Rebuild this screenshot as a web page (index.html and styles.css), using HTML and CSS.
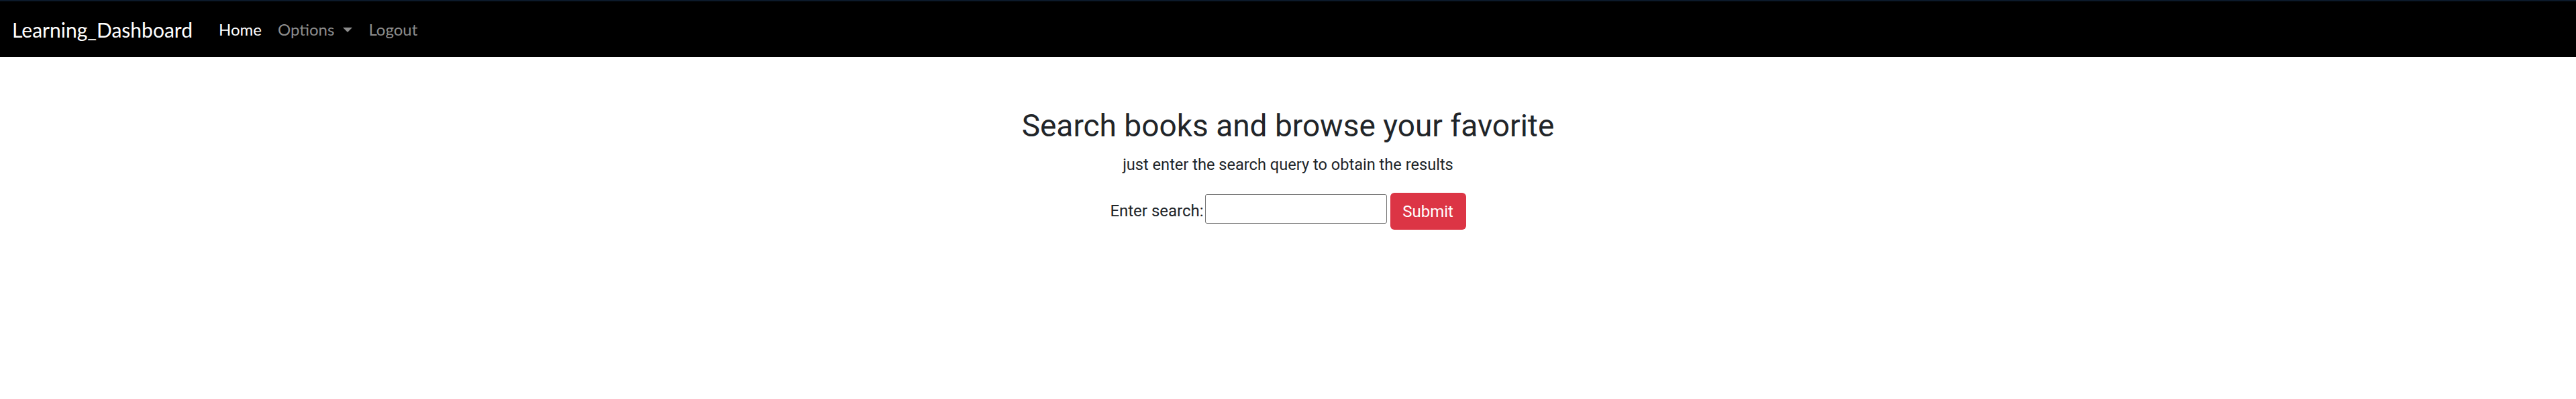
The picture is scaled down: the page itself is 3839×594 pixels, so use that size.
FILE: index.html
```html
<!DOCTYPE html>
<html lang="en">
<head>
<meta charset="utf-8">
<title>Learning_Dashboard</title>
<link rel="stylesheet" href="styles.css">
</head>
<body>
<nav class="navbar">
  <a class="brand" href="#">Learning_Dashboard</a>
  <ul class="nav">
    <li><a class="nav-link active" href="#">Home</a></li>
    <li><a class="nav-link dropdown" href="#">Options<span class="caret"></span></a></li>
    <li><a class="nav-link" href="#">Logout</a></li>
  </ul>
</nav>
<main class="content">
  <h2 class="title">Search books and browse your favorite</h2>
  <p class="subtitle">just enter the search query to obtain the results</p>
  <form class="search-form">
    <label class="search-label" for="q">Enter search:</label>
    <input class="search-input" id="q" type="text">
    <button class="btn-submit" type="submit">Submit</button>
  </form>
</main>
</body>
</html>
```

FILE: styles.css
```css
html, body {
  margin: 0;
  padding: 0;
  background: #ffffff;
}

body {
  font-family: Roboto, "Liberation Sans", sans-serif;
  color: #212529;
}

.navbar {
  display: flex;
  align-items: center;
  height: 83px;
  border-top: 2px solid #0c1a2b;
  background: #000000;
  padding: 0 18px;
  font-family: Lato, "Open Sans", sans-serif;
}

.brand {
  color: #ffffff;
  text-decoration: none;
  font-size: 30px;
  margin-right: 27px;
}

.nav {
  display: flex;
  list-style: none;
  margin: 0;
  padding: 0;
}

.nav-link {
  display: flex;
  align-items: center;
  color: #8c8c8c;
  text-decoration: none;
  font-size: 24px;
  padding: 0 12px;
}

.nav-link.active {
  color: #ffffff;
}

.caret {
  display: inline-block;
  width: 0;
  height: 0;
  margin-left: 13px;
  margin-top: 2px;
  border-top: 7px solid #8c8c8c;
  border-left: 7px solid transparent;
  border-right: 7px solid transparent;
}

.content {
  display: flex;
  flex-direction: column;
  align-items: center;
  padding-top: 75px;
}

.title {
  margin: 0;
  font-size: 46px;
  font-weight: 400;
  line-height: 55px;
}

.subtitle {
  margin: 12px 0 0;
  font-size: 23.6px;
  line-height: 36px;
}

.search-form {
  display: flex;
  align-items: flex-start;
  margin-top: 24px;
}

.search-label {
  font-size: 24px;
  line-height: 28px;
  margin: 13px 2px 0 0;
}

.search-input {
  box-sizing: border-box;
  width: 271px;
  height: 44px;
  border: 1.5px solid #767676;
  border-radius: 3px;
  margin: 2px 0 0;
  font-size: 20px;
}

.btn-submit {
  box-sizing: border-box;
  width: 113px;
  height: 55px;
  margin-left: 5px;
  border: none;
  border-radius: 6px;
  background: #dc3545;
  color: #ffffff;
  font-family: Roboto, "Liberation Sans", sans-serif;
  font-size: 24px;
}
```
